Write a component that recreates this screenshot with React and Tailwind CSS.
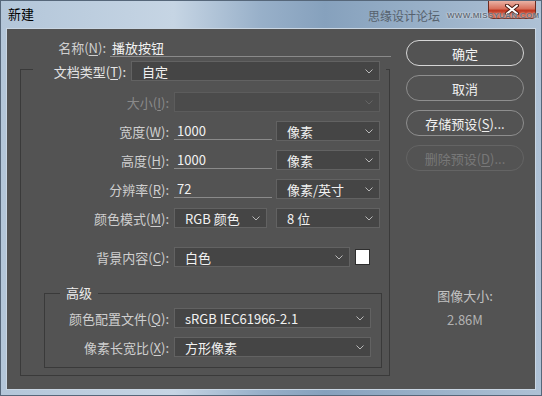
import React from 'react';

const Chevron = ({ dim }) => (
  <svg width="8" height="5" viewBox="0 0 8 5" className="shrink-0">
    <polyline points="0.5,0.5 4,4 7.5,0.5" fill="none" stroke={dim ? '#656565' : '#b8b8b8'} strokeWidth="1" />
  </svg>
);

const Select = ({ value, className, disabled, focus }) => (
  <div
    className={`h-5 flex items-center justify-between pl-[10px] pr-[6px] border text-[13px] leading-none ${
      disabled ? 'bg-[#4b4b4b] border-[#5c5c5c]' : 'bg-[#454545] border-[#626262]'
    } ${focus ? 'border-[#2f78e0]' : ''} ${className}`}
  >
    <span className="text-[#f2f2f2] whitespace-nowrap">{value}</span>
    <Chevron dim={disabled} />
  </div>
);

const Label = ({ text, k, className, disabled }) => (
  <div className={`text-right text-[13px] leading-none whitespace-nowrap ${disabled ? 'text-[#8a8a8a]' : 'text-[#cfcfcf]'} ${className}`}>
    {text}(<u className="underline-offset-2">{k}</u>):
  </div>
);

const Field = ({ value, className }) => (
  <div className={`h-[19px] self-start border-b border-[#8a8a8a] pl-[3px] text-[13px] leading-[19px] text-[#f2f2f2] ${className}`}>
    {value}
  </div>
);

const Button = ({ children, primary, disabled }) => (
  <button
    className={`h-[26px] w-[118px] rounded-full border flex items-center justify-center text-[13px] leading-none ${
      primary ? 'border-[#d6d6d6] text-[#f4f4f4]' : disabled ? 'border-[#646464] text-[#787878]' : 'border-[#8e8e8e] text-[#f0f0f0]'
    }`}
  >
    {children}
  </button>
);

export default function App() {
  return (
    <div className="relative w-[542px] h-[396px] overflow-hidden border border-[#56677a] bg-[linear-gradient(90deg,#b3c6d9_0%,#c6d5e4_32%,#98b0c9_48%,#86a1bd_60%,#9cb3ca_82%,#aec1d5_100%)] font-['Noto_Sans_CJK_SC',sans-serif]">
      {/* title bar */}
      <div className="h-[27px] flex items-start">
        <div className="pl-[7px] pt-[5px] text-[13px] leading-4 text-black">新建</div>
      </div>

      {/* close button sits under the watermark */}
      <div className="absolute right-[5px] -top-px w-[48px] h-[19px] rounded-b-[4px] border border-[#6b2a20] bg-[#c8442c] bg-[linear-gradient(180deg,#eab2a5_0%,#d8705c_45%,#c13a24_55%,#cf5a3e_100%)] flex items-center justify-center">
        <svg width="14" height="11" viewBox="0 0 14 11">
          <path d="M2 1.5 L12 9.5 M12 1.5 L2 9.5" stroke="#4a1c14" strokeWidth="4" strokeLinecap="round" />
          <path d="M2 1.5 L12 9.5 M12 1.5 L2 9.5" stroke="#ffffff" strokeWidth="2" strokeLinecap="round" />
        </svg>
      </div>
      <div className="absolute left-[367px] top-[7px] flex items-center gap-[7px] whitespace-nowrap pointer-events-none">
        <span className="text-[12px] leading-4 text-[#56616d]">思缘设计论坛</span>
        <span className="text-[8px] leading-4 font-bold tracking-[0.3px] text-[#66717d] font-['Liberation_Sans',sans-serif] [text-shadow:0_0_2px_#ffffff]">WWW.MISSYUAN.COM</span>
      </div>

      {/* content */}
      <div className="ml-[5px] w-[530px] h-[362px] border border-[#c9d6e3] bg-[#535353] flex items-start pt-[9px] pl-[13px]">
        {/* left column */}
        <div className="w-[371px]">
          <div className="h-[19px] flex items-center">
            <Label text="名称" k="N" className="w-[86px]" />
            <div className="ml-[4px] w-[281px] h-[19px] border-b border-[#8a8a8a] pl-[2px] text-[13px] leading-[19px] text-[#f2f2f2]">播放按钮</div>
          </div>

          <div className="mt-[12px] w-[370px] border border-[#3a3a3a] pb-[7px]">
            <div className="-mt-[9px] ml-[12px] w-[353px] h-5 bg-[#535353] flex items-center">
              <Label text="文档类型" k="T" className="w-[93px] text-[#e4e4e4]" />
              <Select value="自定" className="ml-[5px] w-[249px]" />
            </div>

            <div className="mt-[11px] flex flex-col gap-[9px]">
              <div className="h-5 flex items-center">
                <Label text="大小" k="I" disabled className="w-[148px]" />
                <Select value="" disabled className="ml-[5px] w-[206px]" />
              </div>
              <div className="h-5 flex items-center">
                <Label text="宽度" k="W" className="w-[148px]" />
                <Field value="1000" className="ml-[5px] w-[98px]" />
                <Select value="像素" className="ml-[4px] w-[104px]" />
              </div>
              <div className="h-5 flex items-center">
                <Label text="高度" k="H" className="w-[148px]" />
                <Field value="1000" className="ml-[5px] w-[98px]" />
                <Select value="像素" className="ml-[4px] w-[104px]" />
              </div>
              <div className="h-5 flex items-center">
                <Label text="分辨率" k="R" className="w-[148px]" />
                <Field value="72" className="ml-[5px] w-[98px]" />
                <Select value="像素/英寸" className="ml-[4px] w-[104px]" />
              </div>
              <div className="h-5 flex items-center">
                <Label text="颜色模式" k="M" className="w-[148px]" />
                <Select value="RGB 颜色" className="ml-[5px] w-[93px]" />
                <Select value="8 位" className="ml-[9px] w-[104px]" />
              </div>
              <div className="mt-[10px] h-5 flex items-center">
                <Label text="背景内容" k="C" className="w-[148px]" />
                <Select value="白色" className="ml-[5px] w-[176px]" />
                <div className="ml-[5px] w-[15px] h-[16px] bg-white border border-[#2e2e2e]" />
              </div>
            </div>

            <div className="mt-[26px] ml-[23px] w-[338px] border border-[#3a3a3a] pb-[10px]">
              <div className="-mt-[9px] ml-[15px] w-fit px-[6px] h-4 bg-[#535353] text-[13px] leading-4 text-[#ececec]">高级</div>
              <div className="mt-[7px] flex flex-col gap-[9px]">
                <div className="h-5 flex items-center">
                  <Label text="颜色配置文件" k="Q" className="w-[124px]" />
                  <Select value="sRGB IEC61966-2.1" focus className="ml-[5px] w-[197px]" />
                </div>
                <div className="h-5 flex items-center">
                  <Label text="像素长宽比" k="X" className="w-[124px]" />
                  <Select value="方形像素" className="ml-[5px] w-[197px]" />
                </div>
              </div>
            </div>
          </div>
        </div>

        {/* right column */}
        <div className="ml-[15px] mt-[2px] w-[118px] flex flex-col">
          <div className="flex flex-col gap-[9px]">
            <Button primary>确定</Button>
            <Button>取消</Button>
            <Button>存储预设(<u className="underline-offset-2">S</u>)...</Button>
            <Button disabled>删除预设(<u className="underline-offset-2">D</u>)...</Button>
          </div>
          <div className="mt-[117px] text-center text-[13px] leading-4 text-[#c2c2c2]">图像大小:</div>
          <div className="mt-[8px] text-center text-[13px] leading-4 text-[#b2b2b2]">2.86M</div>
        </div>
      </div>
    </div>
  );
}
